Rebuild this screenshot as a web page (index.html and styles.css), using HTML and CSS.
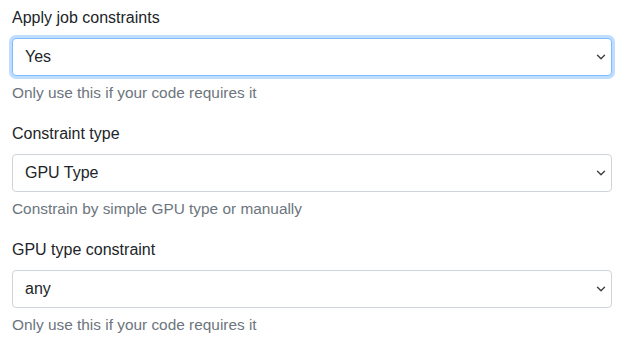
FILE: index.html
```html
<!DOCTYPE html>
<html lang="en">
<head>
    <meta charset="UTF-8">
    <meta name="viewport" content="width=device-width, initial-scale=1.0">
    <title>Job constraints</title>
    <link rel="stylesheet" href="styles.css">
</head>
<body>
    <form class="settings">
        <div class="form-group">
            <label for="applyConstraints">Apply job constraints</label>
            <div class="select-wrapper">
                <select id="applyConstraints" class="form-select is-focused">
                    <option selected>Yes</option>
                    <option>No</option>
                </select>
                <svg class="select-arrow" viewBox="0 0 10 6" width="10" height="6"><path d="M1.5 1.2l3.5 3.5 3.5-3.5" fill="none" stroke="#3c4043" stroke-width="1.4" stroke-linecap="round" stroke-linejoin="round"/></svg>
            </div>
            <div class="form-text">Only use this if your code requires it</div>
        </div>

        <div class="form-group">
            <label for="constraintType">Constraint type</label>
            <div class="select-wrapper">
                <select id="constraintType" class="form-select">
                    <option selected>GPU Type</option>
                    <option>Manual</option>
                </select>
                <svg class="select-arrow" viewBox="0 0 10 6" width="10" height="6"><path d="M1.5 1.2l3.5 3.5 3.5-3.5" fill="none" stroke="#3c4043" stroke-width="1.4" stroke-linecap="round" stroke-linejoin="round"/></svg>
            </div>
            <div class="form-text">Constrain by simple GPU type or manually</div>
        </div>

        <div class="form-group">
            <label for="gpuType">GPU type constraint</label>
            <div class="select-wrapper">
                <select id="gpuType" class="form-select">
                    <option selected>any</option>
                </select>
                <svg class="select-arrow" viewBox="0 0 10 6" width="10" height="6"><path d="M1.5 1.2l3.5 3.5 3.5-3.5" fill="none" stroke="#3c4043" stroke-width="1.4" stroke-linecap="round" stroke-linejoin="round"/></svg>
            </div>
            <div class="form-text">Only use this if your code requires it</div>
        </div>
    </form>
</body>
</html>
```

FILE: styles.css
```css
body {
    margin: 0;
    padding: 6px 10px 0 12px;
    font-family: "Liberation Sans", Arial, sans-serif;
    font-size: 16px;
    line-height: 1.5;
    color: #212529;
    background: #fff;
}

.form-group {
    margin-bottom: 18px;
}

.form-group label {
    display: block;
    margin-bottom: 8px;
}

.select-wrapper {
    position: relative;
}

.form-select {
    display: block;
    width: 100%;
    height: 38px;
    padding: 6px 36px 6px 12px;
    font-family: inherit;
    font-size: 16px;
    line-height: 1.5;
    color: #212529;
    background: #fff;
    border: 1px solid #ced4da;
    border-radius: 4px;
    appearance: none;
    -webkit-appearance: none;
    outline: none;
}

.form-select.is-focused {
    border-color: #80bdff;
    box-shadow: 0 0 0 3px rgba(0, 123, 255, 0.25);
}

.select-arrow {
    position: absolute;
    right: 6px;
    top: 16px;
    pointer-events: none;
}

.form-text {
    margin-top: 5px;
    font-size: 15.4px;
    line-height: 1.5;
    color: #6c757d;
}
```
